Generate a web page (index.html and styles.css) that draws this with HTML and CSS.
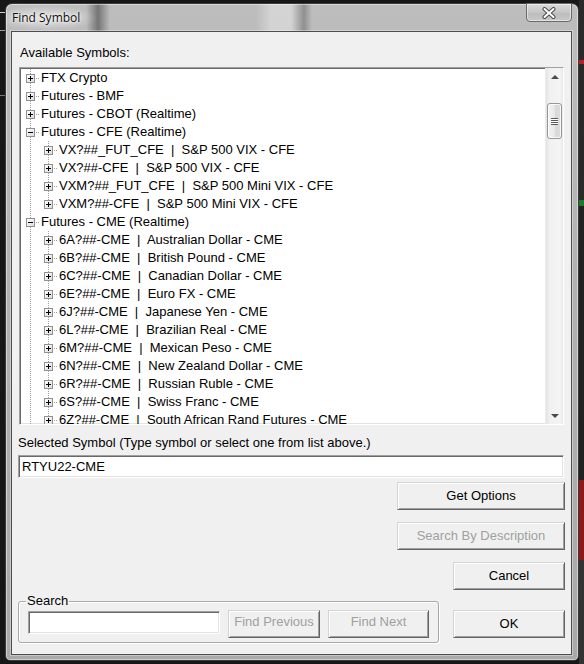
FILE: index.html
```html
<!DOCTYPE html>
<html>
<head>
<meta charset="utf-8">
<title>Find Symbol</title>
<link rel="stylesheet" href="styles.css">
</head>
<body>
<div class="desktop">
  <div class="window">
    <div class="titlebar">
      <span class="title">Find Symbol</span>
      <div class="close">
        <svg width="16" height="12" viewBox="0 0 16 12">
          <path d="M3.5 2 L12.5 10 M12.5 2 L3.5 10" stroke="#4a4a4a" stroke-width="4" stroke-linecap="round" fill="none"/>
          <path d="M3.5 2 L12.5 10 M12.5 2 L3.5 10" stroke="#ffffff" stroke-width="2" stroke-linecap="round" fill="none"/>
        </svg>
      </div>
    </div>
    <div class="client">
      <div class="lbl lbl-avail">Available Symbols:</div>
      <div class="tree">
        <div class="rows">
          <div class="row"><span class="cell v h"><span class="box plus"></span></span><span class="txt">FTX Crypto</span></div>
          <div class="row"><span class="cell v h"><span class="box plus"></span></span><span class="txt">Futures - BMF</span></div>
          <div class="row"><span class="cell v h"><span class="box plus"></span></span><span class="txt">Futures - CBOT (Realtime)</span></div>
          <div class="row"><span class="cell v h"><span class="box"></span></span><span class="txt">Futures - CFE (Realtime)</span></div>
          <div class="row"><span class="cell v"></span><span class="cell v h"><span class="box plus"></span></span><span class="txt">VX?##_FUT_CFE  |  S&amp;P 500 VIX - CFE</span></div>
          <div class="row"><span class="cell v"></span><span class="cell v h"><span class="box plus"></span></span><span class="txt">VX?##-CFE  |  S&amp;P 500 VIX - CFE</span></div>
          <div class="row"><span class="cell v"></span><span class="cell v h"><span class="box plus"></span></span><span class="txt">VXM?##_FUT_CFE  |  S&amp;P 500 Mini VIX - CFE</span></div>
          <div class="row"><span class="cell v"></span><span class="cell vl h"><span class="box plus"></span></span><span class="txt">VXM?##-CFE  |  S&amp;P 500 Mini VIX - CFE</span></div>
          <div class="row"><span class="cell v h"><span class="box"></span></span><span class="txt">Futures - CME (Realtime)</span></div>
          <div class="row"><span class="cell v"></span><span class="cell v h"><span class="box plus"></span></span><span class="txt">6A?##-CME  |  Australian Dollar - CME</span></div>
          <div class="row"><span class="cell v"></span><span class="cell v h"><span class="box plus"></span></span><span class="txt">6B?##-CME  |  British Pound - CME</span></div>
          <div class="row"><span class="cell v"></span><span class="cell v h"><span class="box plus"></span></span><span class="txt">6C?##-CME  |  Canadian Dollar - CME</span></div>
          <div class="row"><span class="cell v"></span><span class="cell v h"><span class="box plus"></span></span><span class="txt">6E?##-CME  |  Euro FX - CME</span></div>
          <div class="row"><span class="cell v"></span><span class="cell v h"><span class="box plus"></span></span><span class="txt">6J?##-CME  |  Japanese Yen - CME</span></div>
          <div class="row"><span class="cell v"></span><span class="cell v h"><span class="box plus"></span></span><span class="txt">6L?##-CME  |  Brazilian Real - CME</span></div>
          <div class="row"><span class="cell v"></span><span class="cell v h"><span class="box plus"></span></span><span class="txt">6M?##-CME  |  Mexican Peso - CME</span></div>
          <div class="row"><span class="cell v"></span><span class="cell v h"><span class="box plus"></span></span><span class="txt">6N?##-CME  |  New Zealand Dollar - CME</span></div>
          <div class="row"><span class="cell v"></span><span class="cell v h"><span class="box plus"></span></span><span class="txt">6R?##-CME  |  Russian Ruble - CME</span></div>
          <div class="row"><span class="cell v"></span><span class="cell v h"><span class="box plus"></span></span><span class="txt">6S?##-CME  |  Swiss Franc - CME</span></div>
          <div class="row"><span class="cell v"></span><span class="cell v h"><span class="box plus"></span></span><span class="txt">6Z?##-CME  |  South African Rand Futures - CME</span></div>
        </div>
        <div class="vscroll">
          <div class="sbtn"><span class="tri-up"></span></div>
          <div class="thumb"><span class="grip"></span></div>
          <div class="sbtn sbtn-down"><span class="tri-down"></span></div>
        </div>
      </div>
      <div class="lbl lbl-sel">Selected Symbol (Type symbol or select one from list above.)</div>
      <div class="textbox sel-input">RTYU22-CME</div>
      <div class="actions">
        <button class="btn btn-wide">Get Options</button>
        <button class="btn btn-wide gap12" disabled>Search By Description</button>
        <button class="btn btn-mid gap12">Cancel</button>
      </div>
      <div class="last-row">
        <fieldset class="group">
          <legend>Search</legend>
          <div class="textbox search-input"></div>
          <button class="btn btn-prev" disabled>Find Previous</button>
          <button class="btn btn-next" disabled>Find Next</button>
        </fieldset>
        <button class="btn btn-mid btn-ok">OK</button>
      </div>
    </div>
  </div>
</div>
</body>
</html>
```

FILE: styles.css
```css
html, body {
  margin: 0;
  padding: 0;
  background: #151515;
}

.desktop {
  position: relative;
  width: 584px;
  height: 664px;
  overflow: hidden;
  background:
    linear-gradient(to bottom, transparent 0 12px, #cfcfcf 12px 13px, transparent 13px 30px, #9a9a9a 30px 31px, transparent 31px 95px, #777 95px 96px, transparent 96px) 0 0 / 5px 100% no-repeat,
    linear-gradient(to bottom, #2a2a2a 0 60px, #b22 60px 64px, #2a2a2a 64px 200px, #1d7a2a 200px 206px, #222 206px 480px, #8c1a1a 480px 560px, #333 560px) 579px 0 / 5px 100% no-repeat,
    #171717;
  font-family: "Liberation Sans", Arial, sans-serif;
}

.window {
  position: absolute;
  left: 5px;
  top: 3px;
  width: 574px;
  height: 658px;
  box-sizing: border-box;
  border: 1px solid #3a3a3a;
  border-radius: 7px 7px 5px 5px;
  display: flex;
  flex-direction: column;
  background:
    radial-gradient(ellipse 52px 13px at 40px 14px, rgba(255,255,255,0.55), rgba(255,255,255,0) 100%),
    linear-gradient(to right, transparent 0 80px, rgba(30,30,30,0.45) 92px, transparent 104px) 0 0 / 100% 30px no-repeat,
    linear-gradient(to right, transparent 0 250px, rgba(255,255,255,0.35) 265px, rgba(255,255,255,0.35) 285px, rgba(60,60,60,0.35) 298px, transparent 306px) 0 0 / 100% 30px no-repeat,
    linear-gradient(to bottom, #bdbdbd 0, #b2b2b2 40%, #a9a9a9 100%);
  box-shadow: inset 0 0 0 1px rgba(255,255,255,0.45);
}

.titlebar {
  height: 27px;
  display: flex;
  align-items: flex-start;
  flex: none;
}

.title {
  margin-left: 6px;
  font-family: "Open Sans", "Noto Sans", sans-serif;
  font-size: 12px;
  line-height: 28px;
  color: #111;
  text-shadow: 0 0 6px #fff, 0 0 3px #fff;
}

.close {
  margin-left: auto;
  margin-right: 6px;
  margin-top: -1px;
  width: 46px;
  height: 19px;
  box-sizing: border-box;
  border: 1px solid #6a6a6a;
  border-radius: 0 0 4px 4px;
  background: linear-gradient(to bottom, #dadada, #c6c6c6 50%, #bcbcbc 51%, #c8c8c8);
  box-shadow: inset 0 0 0 1px rgba(255,255,255,0.5);
  display: flex;
  align-items: center;
  justify-content: center;
}

.close svg {
  display: block;
}

.client {
  flex: 1;
  margin: 0 6px 5px 5px;
  border: 1px solid #4d4d4d;
  background: #f0f0f0;
  display: flex;
  flex-direction: column;
  box-shadow: 0 0 0 1px rgba(255,255,255,0.35);
}

.lbl {
  font-size: 13px;
  line-height: 16px;
  color: #000;
  margin-left: 6px;
  white-space: nowrap;
}

.lbl-avail {
  margin-left: 8px;
  margin-top: 13px;
  margin-bottom: 6px;
}

.lbl-sel {
  margin-top: 10px;
}

.tree {
  margin-left: 7px;
  width: 545px;
  height: 358px;
  box-sizing: border-box;
  border: 1px solid;
  border-color: #a0a0a0 #ffffff #ffffff #a0a0a0;
  box-shadow: inset 1px 1px 0 #696969, inset -1px -1px 0 #e3e3e3;
  background: #fff;
  display: flex;
  flex: none;
}

.rows {
  flex: 1;
  overflow: hidden;
  padding-left: 1px;
  padding-top: 1px;
}

.row {
  height: 18px;
  display: flex;
  align-items: center;
  font-size: 13px;
  line-height: 18px;
  color: #000;
}

.txt {
  margin-left: 2px;
  white-space: pre;
}

.cell {
  position: relative;
  width: 18px;
  height: 18px;
  flex: none;
}

.cell.v::before,
.cell.vl::before {
  content: "";
  position: absolute;
  left: 9px;
  top: 0;
  width: 1px;
  height: 18px;
  background: repeating-linear-gradient(to bottom, #a0a0a0 0 1px, transparent 1px 2px);
}

.cell.vl::before {
  height: 10px;
}

.cell.h::after {
  content: "";
  position: absolute;
  left: 14px;
  top: 9px;
  width: 5px;
  height: 1px;
  background: repeating-linear-gradient(to right, transparent 0 1px, #a0a0a0 1px 2px);
}

.box {
  position: absolute;
  left: 5px;
  top: 5px;
  width: 9px;
  height: 9px;
  box-sizing: border-box;
  border: 1px solid #919191;
  background: linear-gradient(to bottom right, #ffffff, #dcdcdc);
  z-index: 1;
}

.box::before {
  content: "";
  position: absolute;
  left: 1px;
  top: 3px;
  width: 5px;
  height: 1px;
  background: #000;
}

.box.plus::after {
  content: "";
  position: absolute;
  left: 3px;
  top: 1px;
  width: 1px;
  height: 5px;
  background: #000;
}

.vscroll {
  width: 17px;
  flex: none;
  display: flex;
  flex-direction: column;
  background: linear-gradient(to right, #e3e3e3, #f0f0f0 20%, #f4f4f4 80%, #e8e8e8);
  border-left: 1px solid #ececec;
}

.sbtn {
  height: 17px;
  display: flex;
  align-items: center;
  justify-content: center;
  flex: none;
}

.sbtn-down {
  margin-top: auto;
}

.tri-up {
  width: 0;
  height: 0;
  border-left: 4px solid transparent;
  border-right: 4px solid transparent;
  border-bottom: 4px solid #4a4a4a;
}

.tri-down {
  width: 0;
  height: 0;
  border-left: 4px solid transparent;
  border-right: 4px solid transparent;
  border-top: 4px solid #4a4a4a;
}

.thumb {
  margin: 18px 1px 0 1px;
  height: 36px;
  box-sizing: border-box;
  border: 1px solid #979797;
  border-radius: 3px;
  background: linear-gradient(to right, #f4f4f4, #e8e8e8 50%, #d9d9d9 51%, #dcdcdc);
  box-shadow: inset 0 0 0 1px rgba(255,255,255,0.8);
  display: flex;
  align-items: center;
  justify-content: center;
  flex: none;
}

.grip {
  width: 7px;
  height: 7px;
  background: repeating-linear-gradient(to bottom, #5a5a5a 0 1px, #ffffff 1px 2px);
}

.textbox {
  height: 23px;
  box-sizing: border-box;
  border: 1px solid;
  border-color: #a0a0a0 #ffffff #ffffff #a0a0a0;
  box-shadow: inset 1px 1px 0 #696969, inset -1px -1px 0 #e3e3e3;
  background: #fff;
  font-size: 13px;
  line-height: 21px;
  padding-left: 3px;
  color: #000;
  flex: none;
}

.sel-input {
  margin-left: 6px;
  margin-top: 4px;
  width: 546px;
}

.actions {
  display: flex;
  flex-direction: column;
  align-items: flex-end;
  padding-right: 6px;
}

.btn {
  height: 28px;
  box-sizing: border-box;
  border: 1px solid;
  border-color: #d4d4d4 #646464 #646464 #d4d4d4;
  box-shadow: inset 1px 1px 0 #ffffff, inset -1px -1px 0 #a0a0a0;
  background: #f0f0f0;
  font-family: "Liberation Sans", Arial, sans-serif;
  font-size: 13px;
  line-height: 16px;
  color: #000;
  padding: 0 0 1px 0;
  margin: 0;
  flex: none;
}

.btn:disabled {
  color: #a0a0a0;
}

.btn-wide {
  width: 168px;
  margin-top: 4px;
}

.btn-wide.gap12,
.btn-mid.gap12 {
  margin-top: 12px;
}

.btn-mid {
  width: 112px;
}

.last-row {
  display: flex;
  align-items: flex-start;
  justify-content: space-between;
  padding: 0 6px 0 6px;
}

.group {
  margin: 3px 0 0 0;
  padding: 1px 9px 4px 9px;
  border: 1px solid #a9a9a9;
  border-radius: 3px;
  box-shadow: inset 1px 1px 0 #fff, 1px 1px 0 #fff;
  display: flex;
  align-items: flex-start;
  gap: 8px;
  min-width: 0;
}

.group legend {
  font-size: 13px;
  line-height: 16px;
  color: #000;
  padding: 0 1px;
  margin-left: -2px;
}

.search-input {
  width: 192px;
  margin-top: 1px;
}

.btn-prev {
  width: 92px;
  padding-bottom: 4px;
}

.btn-next {
  width: 101px;
  padding-bottom: 4px;
}

.btn-ok {
  margin-top: 20px;
}
```
